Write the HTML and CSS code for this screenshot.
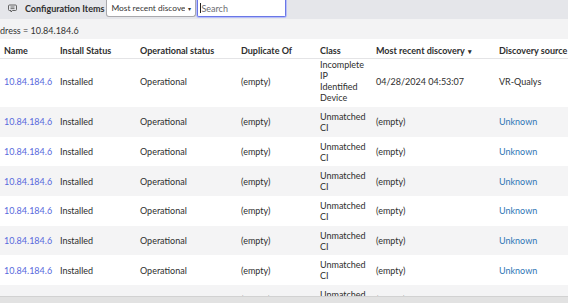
FILE: index.html
```html
<!DOCTYPE html>
<html lang="en">
<head>
    <meta charset="UTF-8">
    <title>Configuration Items</title>
    <link rel="stylesheet" href="styles.css">
</head>
<body>
    <div class="topbar">
        <svg class="ctx-icon" width="9" height="9" viewBox="0 0 9 9">
            <path d="M1.5 1h6a1 1 0 0 1 1 1v3.5a1 1 0 0 1-1 1H4.5L3 8V6.5H1.5a1 1 0 0 1-1-1V2a1 1 0 0 1 1-1z" fill="none" stroke="#555" stroke-width="0.9"/>
            <path d="M2.5 3h4M2.5 4.6h4" stroke="#555" stroke-width="0.8"/>
        </svg>
        <span class="list-title">Configuration Items</span>
        <div class="select">
            <span class="select-text">Most recent discove</span>
            <span class="caret">&#9662;</span>
        </div>
        <div class="search"><span class="cursor"></span>Search</div>
    </div>

    <div class="breadcrumb">dress = 10.84.184.6</div>

    <table class="list">
        <thead>
            <tr>
                <th class="c-name">Name</th>
                <th class="c-install">Install Status</th>
                <th class="c-op">Operational status</th>
                <th class="c-dup">Duplicate Of</th>
                <th class="c-class">Class</th>
                <th class="c-disc">Most recent discovery <span class="sort">&#9662;</span></th>
                <th class="c-src">Discovery source</th>
            </tr>
        </thead>
        <tbody>
            <tr>
                <td><a class="ip" href="#">10.84.184.6</a></td>
                <td>Installed</td>
                <td>Operational</td>
                <td>(empty)</td>
                <td class="cls">Incomplete IP Identified Device</td>
                <td>04/28/2024 04:53:07</td>
                <td>VR-Qualys</td>
            </tr>
            <tr>
                <td><a class="ip" href="#">10.84.184.6</a></td>
                <td>Installed</td>
                <td>Operational</td>
                <td>(empty)</td>
                <td class="cls">Unmatched CI</td>
                <td>(empty)</td>
                <td><a class="src" href="#">Unknown</a></td>
            </tr>
            <tr>
                <td><a class="ip" href="#">10.84.184.6</a></td>
                <td>Installed</td>
                <td>Operational</td>
                <td>(empty)</td>
                <td class="cls">Unmatched CI</td>
                <td>(empty)</td>
                <td><a class="src" href="#">Unknown</a></td>
            </tr>
            <tr>
                <td><a class="ip" href="#">10.84.184.6</a></td>
                <td>Installed</td>
                <td>Operational</td>
                <td>(empty)</td>
                <td class="cls">Unmatched CI</td>
                <td>(empty)</td>
                <td><a class="src" href="#">Unknown</a></td>
            </tr>
            <tr>
                <td><a class="ip" href="#">10.84.184.6</a></td>
                <td>Installed</td>
                <td>Operational</td>
                <td>(empty)</td>
                <td class="cls">Unmatched CI</td>
                <td>(empty)</td>
                <td><a class="src" href="#">Unknown</a></td>
            </tr>
            <tr>
                <td><a class="ip" href="#">10.84.184.6</a></td>
                <td>Installed</td>
                <td>Operational</td>
                <td>(empty)</td>
                <td class="cls">Unmatched CI</td>
                <td>(empty)</td>
                <td><a class="src" href="#">Unknown</a></td>
            </tr>
            <tr>
                <td><a class="ip" href="#">10.84.184.6</a></td>
                <td>Installed</td>
                <td>Operational</td>
                <td>(empty)</td>
                <td class="cls">Unmatched CI</td>
                <td>(empty)</td>
                <td><a class="src" href="#">Unknown</a></td>
            </tr>
            <tr>
                <td><a class="ip" href="#">10.84.184.6</a></td>
                <td>Installed</td>
                <td>Operational</td>
                <td>(empty)</td>
                <td class="cls">Unmatched CI</td>
                <td>(empty)</td>
                <td><a class="src" href="#">Unknown</a></td>
            </tr>
        </tbody>
    </table>

    <div class="hscroll"></div>
</body>
</html>
```

FILE: styles.css
```css
body {
    margin: 0;
    font-family: 'Lato', 'Liberation Sans', sans-serif;
    font-size: 9px;
    color: #2e2e2e;
    background: #fff;
    overflow: hidden;
    height: 303px;
}

.topbar {
    display: flex;
    align-items: flex-start;
    height: 19px;
    background-color: #e5e6ea;
}

.ctx-icon {
    margin: 4px 8px 0 8px;
}

.list-title {
    font-weight: bold;
    font-size: 9px;
    line-height: 17px;
    margin-right: 2px;
}

.select {
    display: flex;
    align-items: center;
    width: 90px;
    height: 17px;
    box-sizing: border-box;
    padding: 0 4px 0 4px;
    background: #fff;
    border: 1px solid #a9a9ad;
    border-top: none;
    border-radius: 0 0 3px 3px;
    font-size: 8.4px;
    color: #333;
    white-space: nowrap;
    overflow: hidden;
}

.select-text {
    overflow: hidden;
    flex: 0 1 auto;
}

.select .caret {
    font-size: 6px;
    margin-left: 3px;
}

.search {
    display: flex;
    align-items: center;
    width: 89px;
    height: 17px;
    box-sizing: border-box;
    margin-left: 1px;
    padding-left: 2px;
    background: #fff;
    border: 1px solid #6a77e6;
    border-top: none;
    border-radius: 0 0 2px 2px;
    box-shadow: 0 0 0 1px #b7befa;
    color: #6d6d72;
    font-size: 9px;
}

.search .cursor {
    display: inline-block;
    width: 1px;
    height: 10px;
    background: #222;
}

.breadcrumb {
    height: 20px;
    line-height: 23px;
    background-color: #f3f3f4;
    font-size: 9px;
    color: #333;
}

.list {
    width: 568px;
    border-collapse: collapse;
    table-layout: fixed;
}

.list th {
    text-align: left;
    font-weight: bold;
    height: 15px;
    padding: 4px 4px 0 0;
    border-bottom: 1px solid #e4e4e6;
    line-height: 11px;
    white-space: nowrap;
}

.list td {
    padding: 2px 4px 2px 0;
    line-height: 11px;
    vertical-align: middle;
}

.list td.cls {
    padding-right: 12px;
}

.list tbody tr {
    height: 29.7px;
}

.list tbody tr:first-child td {
    padding-bottom: 4px;
    padding-top: 0;
}

.list tbody tr:nth-child(even) {
    background-color: #f4f4f5;
}

.list th:first-child,
.list td:first-child {
    padding-left: 4px;
}

.c-name { width: 52px; }
.c-install { width: 76px; }
.c-op { width: 97px; }
.c-dup { width: 75px; }
.c-class { width: 52px; }
.c-disc { width: 119px; }
.c-src { width: 65px; }

.sort {
    font-size: 7px;
    margin-left: 1px;
}

a.ip {
    color: #5869dd;
    text-decoration: none;
}

a.src {
    color: #2f75b5;
    text-decoration: none;
}

.hscroll {
    position: fixed;
    left: 0;
    right: 0;
    bottom: 0;
    height: 6px;
    background: #e2e2e2;
    border-top: 1px solid #d2d2d2;
}
```
